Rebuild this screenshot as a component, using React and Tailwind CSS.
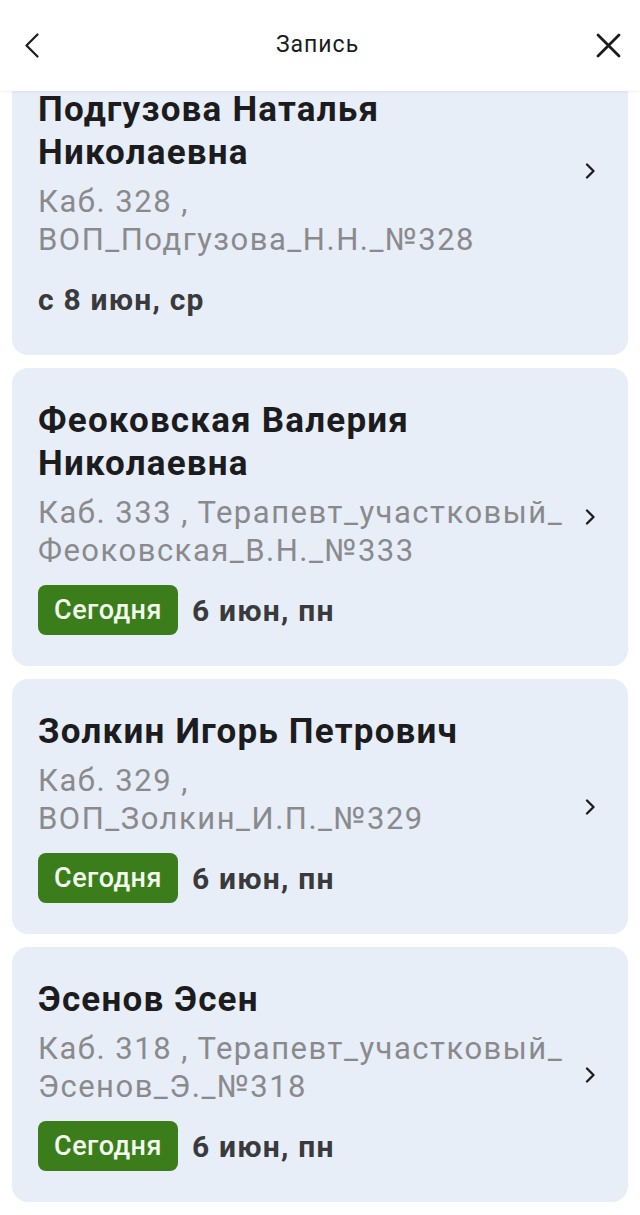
const doctors = [
  {
    name: ["Подгузова Наталья", "Николаевна"],
    room: ["Каб. 328 ,", "ВОП_Подгузова_Н.Н._№328"],
    date: "с 8 июн, ср",
    today: false,
    first: true,
  },
  {
    name: ["Феоковская Валерия", "Николаевна"],
    room: ["Каб. 333 , Терапевт_участковый_", "Феоковская_В.Н._№333"],
    date: "6 июн, пн",
    today: true,
  },
  {
    name: ["Золкин Игорь Петрович"],
    room: ["Каб. 329 ,", "ВОП_Золкин_И.П._№329"],
    date: "6 июн, пн",
    today: true,
  },
  {
    name: ["Эсенов Эсен"],
    room: ["Каб. 318 , Терапевт_участковый_", "Эсенов_Э._№318"],
    date: "6 июн, пн",
    today: true,
  },
];

function DoctorCard({ doc }) {
  return (
    <div className="flex rounded-[16px] bg-[#e7eef8]">
      <div
        className={`flex-1 min-w-0 pl-[26px] pb-[31px] ${
          doc.first ? "pt-[101px]" : "pt-[31px]"
        }`}
      >
        <div className="text-[35px] leading-[43px] font-bold tracking-[1.2px] text-[#1c1c1e] whitespace-nowrap">
          {doc.name.map((line) => (
            <div key={line}>{line}</div>
          ))}
        </div>
        <div className="mt-[9px] text-[31px] leading-[38px] tracking-[1.5px] text-[#8a8a8d] whitespace-nowrap">
          {doc.room.map((line) => (
            <div key={line}>{line}</div>
          ))}
        </div>
        <div className="mt-[15px] flex items-center gap-[14px] h-[50px]">
          {doc.today && (
            <span className="flex items-center h-[50px] px-[16px] rounded-[8px] bg-[#3b7d1b] text-[#f2fbee] text-[27px] tracking-[0.5px] font-medium">
              Сегодня
            </span>
          )}
          <span className="text-[30px] font-bold tracking-[1.2px] text-[#3a3a3c]">{doc.date}</span>
        </div>
      </div>
      <div className="flex items-center pr-[33px]">
        <svg width="10" height="16" viewBox="0 0 10 16" fill="none">
          <polyline
            points="2,1.5 8.5,8 2,14.5"
            stroke="#1c1c1e"
            strokeWidth="2.3"
            strokeLinecap="round"
            strokeLinejoin="round"
          />
        </svg>
      </div>
    </div>
  );
}

export default function App() {
  return (
    <div className="h-[1215px] overflow-hidden bg-white font-['Roboto',sans-serif]">
      <header className="relative z-10 h-[91px] bg-white flex items-center justify-between pl-[25px] pr-[19px] shadow-[0_1px_2px_rgba(0,0,0,0.06)]">
        <svg width="14" height="25" viewBox="0 0 14 25" fill="none">
          <polyline
            points="12.5,1.5 1.5,12.5 12.5,23.5"
            stroke="#1c1c1e"
            strokeWidth="2.2"
            strokeLinecap="round"
            strokeLinejoin="round"
          />
        </svg>
        <span className="text-[23px] tracking-[1px] text-[#1c1c1e]">Запись</span>
        <svg width="25" height="25" viewBox="0 0 25 25" fill="none">
          <path
            d="M2 2 L23 23 M23 2 L2 23"
            stroke="#1c1c1e"
            strokeWidth="2.8"
            strokeLinecap="round"
          />
        </svg>
      </header>
      <main className="-mt-[104px] px-[12px] flex flex-col gap-[13px]">
        {doctors.map((doc) => (
          <DoctorCard key={doc.room[1]} doc={doc} />
        ))}
      </main>
    </div>
  );
}
